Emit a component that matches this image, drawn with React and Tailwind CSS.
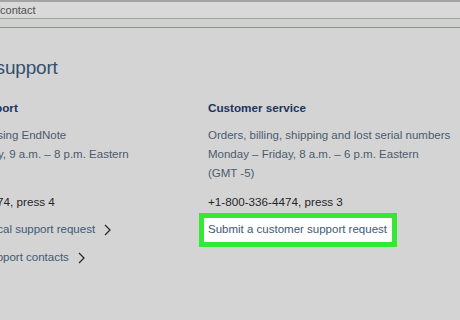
import React from "react";

function Chevron() {
  return (
    <svg width="7" height="12" viewBox="0 0 7 12" className="ml-[9px] shrink-0">
      <path d="M1 1 L6 6 L1 11" fill="none" stroke="#2a2a2a" strokeWidth="1.3" />
    </svg>
  );
}

export default function App() {
  return (
    <div
      className="w-[460px] h-[320px] overflow-hidden bg-[#d4d4d4] relative"
      style={{ fontFamily: '"Liberation Sans", Arial, sans-serif' }}
    >
      {/* browser chrome */}
      <div className="h-[2px] bg-[#a3a3a3]" />
      <div className="h-[16px] bg-[#d9d9d9] flex items-center">
        <span className="ml-[-3px] text-[11px] leading-[16px] text-[#505050]">/contact</span>
      </div>
      <div className="h-[1px] bg-[#a2a6a2]" />
      <div className="h-[8px] bg-[#d0d2d0]" />
      <div className="h-[1px] bg-[#8e928e]" />

      {/* page */}
      <div className="ml-[-82px]">
        <h1 className="mt-[28px] text-[19px] leading-[24px] font-normal text-[#34506e] tracking-[-0.2px] whitespace-nowrap">
          EndNote support
        </h1>
        <div className="mt-[18px] flex">
          {/* left column */}
          <div className="w-[290px] shrink-0 text-[11.5px] leading-[19px] whitespace-nowrap">
            <h2 className="font-bold text-[11.7px] text-[#1c3461]">Technical support</h2>
            <div className="mt-[9px] text-[#4b5b6e]">
              <p className="ml-[14px]">Assistance using EndNote</p>
              <p>Monday – Friday, 9 a.m. – 8 p.m. Eastern</p>
              <p>(GMT -5)</p>
            </div>
            <p className="mt-[9px] ml-[2px] text-[11.7px] text-[#262626]">+1-800-336-4474, press 4</p>
            <div className="mt-[9px] flex items-center text-[#3d5874]">
              <span>Submit a technical support request</span>
              <Chevron />
            </div>
            <div className="mt-[9px] flex items-center text-[#3d5874]">
              <span>International support contacts</span>
              <Chevron />
            </div>
          </div>
          {/* right column */}
          <div className="flex-1 text-[11.5px] leading-[19px] whitespace-nowrap">
            <h2 className="font-bold text-[11.7px] text-[#1c3461]">Customer service</h2>
            <div className="mt-[9px] text-[#4b5b6e]">
              <p>Orders, billing, shipping and lost serial numbers</p>
              <p>Monday – Friday, 8 a.m. – 6 p.m. Eastern</p>
              <p>(GMT -5)</p>
            </div>
            <p className="mt-[9px] text-[11.7px] text-[#262626]">+1-800-336-4474, press 3</p>
            <div className="mt-[2px] ml-[-9px] w-[198px] border-[5px] border-[#36e836] bg-white pl-[4px] pt-[2px] pb-[3px] text-[#3d5874]">
              Submit a customer support request
            </div>
          </div>
        </div>
      </div>
    </div>
  );
}
